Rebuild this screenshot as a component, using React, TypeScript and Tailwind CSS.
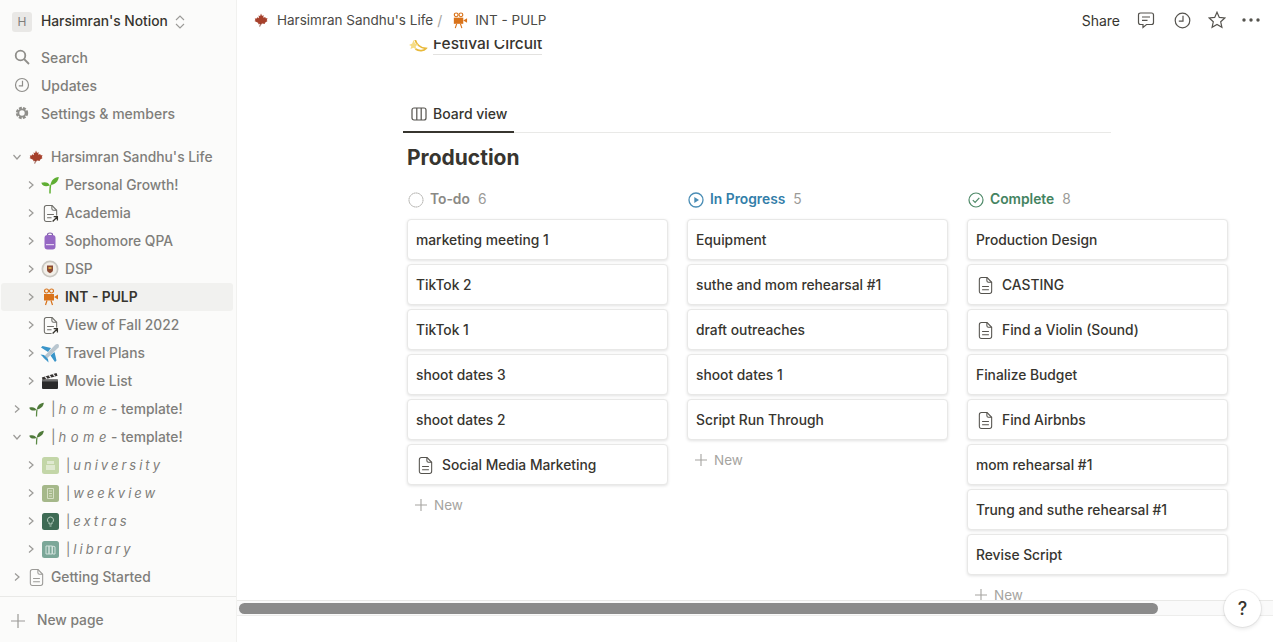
import { ReactNode } from 'react';

const font = { fontFamily: 'Inter, "Liberation Sans", sans-serif' };

function Leaf({ size = 14 }: { size?: number }) {
  return (
    <svg width={size} height={size} viewBox="0 0 16 16">
      <path d="M8 .5l1.200 2.800 1.700-1-.2 3.200 2.200-1 .4 1.500 2.200.1-1 2.100 1 .8-3.300 2.300.4 1.400-3.300-.6-.6 1.600-.5-1.600-3.600.7.500-1.500L.5 9.200l1.200-.9-.8-2 2.200 0 .5-1.500 2 1.100-.3-3.300 1.600 1z" fill="#a6402b" />
      <path d="M7.600 11.500L6.600 15.500" stroke="#7c3020" strokeWidth="1" />
    </svg>
  );
}

function Sprout({ size = 18, dark = false }: { size?: number; dark?: boolean }) {
  const c = dark ? '#4f7a3a' : '#5fae33';
  return (
    <svg width={size} height={size} viewBox="0 0 18 18">
      <path d="M9 17.500c0-4 0-6 .6-8.500" stroke={dark ? '#5b8a45' : '#62b236'} strokeWidth="1.500" fill="none" />
      <path d="M9.400 9C10 4.500 13 1.500 17.800 1 17.300 5.500 14 8.500 9.400 9z" fill={c} />
      <path d="M8.800 9.500C7.500 6.500 4.500 5.500.2 6.800 1.700 10.500 5 11 8.800 9.500z" fill={c} />
    </svg>
  );
}

function DocIcon({ size = 16, color = '#6f6e69', arrow = false }: { size?: number; color?: string; arrow?: boolean }) {
  return (
    <svg width={size} height={size} viewBox="0 0 16 16" fill="none" stroke={color} strokeWidth="1">
      <path d="M2.200 2.500C2.200 1.200 2.900.5 4.200.5h5.300L13.800 5v8.500c0 1.300-.7 2-2 2H4.200c-1.300 0-2-.7-2-2z" />
      <path d="M9.300.5V3.500c0 1 .5 1.500 1.500 1.500h3M4.800 9h6.400M4.800 12h6.400" />
      {arrow && (
        <g>
          <rect x="9" y="10" width="7" height="6" fill="#fbfbfa" stroke="none" />
          <path d="M10 15.500l4.500-4.500M11 11h3.500v3.500" stroke="#37352f" strokeWidth="1.200" />
        </g>
      )}
    </svg>
  );
}

function Backpack() {
  return (
    <svg width={18} height={18} viewBox="0 0 18 18">
      <path d="M6.500 4V2.800C6.500 1.500 7.500 1 9 1s2.500.5 2.500 1.800V4" stroke="#7d5aa8" strokeWidth="1.200" fill="none" />
      <rect x="3.500" y="3" width="11" height="14.500" rx="3" fill="#9668c4" />
      <rect x="5" y="12" width="8" height="1.200" fill="#e3d5f0" />
    </svg>
  );
}

function Seal() {
  return (
    <svg width={18} height={18} viewBox="0 0 18 18">
      <circle cx="9" cy="9" r="8.500" fill="#c9c7c1" />
      <circle cx="9" cy="9" r="6.800" fill="#f2efe8" />
      <path d="M6 5.500h6v4.500c0 1.500-1.500 2.500-3 3.200C7.500 12.500 6 11.500 6 10z" fill="#8a4a35" />
      <path d="M7.500 7h3v2h-3z" fill="#d9a441" />
    </svg>
  );
}

function Camera({ size = 18 }: { size?: number }) {
  const c = '#d9731a';
  return (
    <svg width={size} height={size} viewBox="0 0 18 18" fill="none">
      <circle cx="5.500" cy="3" r="2" stroke={c} strokeWidth="1.200" />
      <circle cx="10.500" cy="3" r="2" stroke={c} strokeWidth="1.200" />
      <rect x="3" y="6" width="10" height="6.500" fill={c} />
      <path d="M13 9l4-2.500v5L13 9z" fill={c} />
      <path d="M6 12.500L4.500 17M10 12.500l1.500 4.500" stroke={c} strokeWidth="1.200" />
    </svg>
  );
}

function Plane() {
  return (
    <svg width={20} height={20} viewBox="0 0 20 20">
      <path d="M18.500 1.500c-1-.9-2.500-.4-3.500.6L3 14.500l2.500 2.500L18 5c1-1 1.400-2.500.5-3.500z" fill="#b9c6cf" />
      <path d="M11 5L2.500 3 1 4.500 8 9zM14.500 9l2 8.500L15 19l-4.500-6.500z" fill="#3a95c9" />
      <path d="M4 12l-3.500-.5 4 4 4 4-.5-3.500z" fill="#3a95c9" />
    </svg>
  );
}

function Clapper() {
  return (
    <svg width={18} height={18} viewBox="0 0 18 18">
      <rect x="1" y="7.500" width="16" height="9.500" rx="1" fill="#2b2b2b" />
      <path d="M.8 5.500L15.500 1l1 2.800L1.800 8z" fill="#33302e" />
      <path d="M4 4.500l2 2.300M8 3.300l2 2.300M12 2.100l2 2.300" stroke="#e8e8e8" strokeWidth="1.300" />
      <rect x="1" y="7.500" width="16" height="2" fill="#6f6f6f" />
    </svg>
  );
}

function Tile({ bg, fg, kind }: { bg: string; fg: string; kind: 'cap' | 'list' | 'bulb' | 'books' }) {
  return (
    <svg width={17} height={17} viewBox="0 0 17 17">
      <rect width="17" height="17" rx="2.500" fill={bg} />
      {kind === 'cap' && <path d="M5 4h7v3H5zM4 8h9v5H4z" fill={fg} />}
      {kind === 'list' && <path d="M5.500 3.500h6v10h-6zM7 6h3M7 8.500h3M7 11h3" fill="none" stroke={fg} strokeWidth="1" />}
      {kind === 'bulb' && <path d="M8.500 4a3 3 0 0 0-1.500 5.600V11h3V9.600A3 3 0 0 0 8.500 4zM7.500 13h2" fill="none" stroke={fg} strokeWidth="1" />}
      {kind === 'books' && <path d="M4 5h3v8H4zM7 5h3v8H7zM10.500 5l2.500.8v7.200h-2.500z" fill="none" stroke={fg} strokeWidth="1" />}
    </svg>
  );
}

function Chevron({ open, color = '#9b9a97' }: { open?: boolean; color?: string }) {
  return (
    <svg width={10} height={10} viewBox="0 0 10 10" fill="none" stroke={color} strokeWidth="1.200" className="shrink-0">
      {open ? <path d="M1.500 3l3.500 4 3.500-4" /> : <path d="M3 1.500l4 3.500-4 3.500" />}
    </svg>
  );
}

function Row({ depth, open, icon, active, children }: { depth: 0 | 1; open?: boolean; icon: ReactNode; active?: boolean; children: ReactNode }) {
  return (
    <div className={`flex h-7 items-center ml-[1px] mr-[3px] rounded-[3px] text-[13.8px] ${depth === 0 ? 'pl-[11px]' : 'pl-[25px]'} ${active ? 'bg-[#f1f1ef] font-semibold text-[#37352f]' : 'font-medium text-[#7f7e7a]'}`}>
      <Chevron open={open} />
      <span className="flex w-[22px] ml-[3px] mr-[4px] shrink-0 justify-center">{icon}</span>
      {children}
    </div>
  );
}

function Spaced({ text }: { text: string }) {
  return (
    <span className="inline-block pt-[2px] text-[13px] font-normal text-[#7f7e7a]">
      <span className="ml-[1px] mr-[3px]">|</span>
      <span className="italic tracking-[3px]">{text}</span>
    </span>
  );
}

function Home() {
  return (
    <span className="font-normal">
      <span className="mr-[3px]">|</span>
      <span className="italic tracking-[4.500px] text-[13px]">home</span>
      <span className="font-medium">- template!</span>
    </span>
  );
}

function Sidebar() {
  return (
    <aside className="flex w-[237px] shrink-0 flex-col bg-[#fbfbfa] border-r border-[#f1f1ef]">
      <div className="flex h-[43px] items-center pl-[12px]">
        <div className="flex h-[20px] w-[20px] items-center justify-center rounded-[3px] bg-[#e9e8e6] text-[12px] text-[#7f7e7a]">H</div>
        <span className="ml-[9px] text-[13.8px] font-medium text-[#37352f]">Harsimran's Notion</span>
        <svg width={10} height={14} viewBox="0 0 10 14" fill="none" stroke="#9b9a97" strokeWidth="1.100" className="ml-[7px]">
          <path d="M1 5l4-4 4 4M1 9l4 4 4-4" />
        </svg>
      </div>
      {[
        { label: 'Search', icon: <svg width={16} height={16} viewBox="0 0 16 16" fill="none" stroke="#8f8e8a" strokeWidth="1.800"><circle cx="6.500" cy="6.500" r="4.800" /><path d="M10 10l5 5" /></svg> },
        { label: 'Updates', icon: <svg width={16} height={16} viewBox="0 0 16 16" fill="none" stroke="#8f8e8a" strokeWidth="1.200"><circle cx="8" cy="8" r="6.500" /><path d="M8.500 3.800V8.800H4.800" /></svg> },
        { label: 'Settings & members', icon: <svg width={16} height={16} viewBox="0 0 16 16" fill="none" stroke="#8f8e8a" strokeWidth="2.400" strokeDasharray="2.800 1.200"><circle cx="8" cy="8" r="5" /><circle cx="8" cy="8" r="3.600" strokeWidth="1.800" strokeDasharray="none" /></svg> },
      ].map((item) => (
        <div key={item.label} className="flex h-7 items-center pl-[14px] text-[14px] font-medium text-[#7f7e7a]">
          <span className="flex w-[16px] justify-center">{item.icon}</span>
          <span className="ml-[11px]">{item.label}</span>
        </div>
      ))}
      <div className="mt-[16px] flex-1 overflow-hidden">
        <Row depth={0} open icon={<Leaf />}>Harsimran Sandhu's Life</Row>
        <Row depth={1} icon={<Sprout />}>Personal Growth!</Row>
        <Row depth={1} icon={<DocIcon size={17} arrow />}>Academia</Row>
        <Row depth={1} icon={<Backpack />}>Sophomore QPA</Row>
        <Row depth={1} icon={<Seal />}>DSP</Row>
        <Row depth={1} active icon={<Camera />}>INT - PULP</Row>
        <Row depth={1} icon={<DocIcon size={17} arrow />}>View of Fall 2022</Row>
        <Row depth={1} icon={<Plane />}>Travel Plans</Row>
        <Row depth={1} icon={<Clapper />}>Movie List</Row>
        <Row depth={0} icon={<Sprout size={15} dark />}><Home /></Row>
        <Row depth={0} open icon={<Sprout size={15} dark />}><Home /></Row>
        <Row depth={1} icon={<Tile bg="#c3d6a8" fg="#dfe9d0" kind="cap" />}><Spaced text="university" /></Row>
        <Row depth={1} icon={<Tile bg="#a5b88a" fg="#d5dfc4" kind="list" />}><Spaced text="weekview" /></Row>
        <Row depth={1} icon={<Tile bg="#3e6b55" fg="#b9d0c2" kind="bulb" />}><Spaced text="extras" /></Row>
        <Row depth={1} icon={<Tile bg="#7ba798" fg="#d2e2dc" kind="books" />}><Spaced text="library" /></Row>
        <Row depth={0} icon={<DocIcon size={17} color="#9b9a97" />}>Getting Started</Row>
      </div>
      <div className="flex h-[46px] shrink-0 items-center border-t border-[#e9e9e7] pl-[11px] pt-[2px] text-[13.8px] font-medium text-[#7f7e7a]">
        <svg width={14} height={14} viewBox="0 0 14 14" stroke="#9b9a97" strokeWidth="1.200"><path d="M7 0v14M0 7h14" /></svg>
        <span className="ml-[12px]">New page</span>
      </div>
    </aside>
  );
}

function TopBar() {
  return (
    <header className="flex h-10 shrink-0 items-center bg-white pl-[17px] pr-[13px] text-[14px] text-[#37352f]">
      <Leaf />
      <span className="ml-[9px] text-[13.500px] text-[#4b4a46]">Harsimran Sandhu's Life</span>
      <span className="ml-[4px] text-[#a5a4a0]">/</span>
      <span className="ml-[9px]"><Camera size={17} /></span>
      <span className="ml-[7px] text-[13.500px] text-[#4b4a46]">INT - PULP</span>
      <span className="ml-auto">Share</span>
      <svg width={18} height={18} viewBox="0 0 18 18" fill="none" stroke="#55534e" strokeWidth="1.200" className="ml-[17px]">
        <path d="M3.500 2h11C15.800 2 16.500 2.700 16.500 4v7.500c0 1.300-.7 2-2 2H9.500L6 16.500v-3H3.500c-1.300 0-2-.7-2-2V4C1.500 2.700 2.200 2 3.500 2z" />
        <path d="M5 6h8M5 9.300h5.500" />
      </svg>
      <svg width={17} height={17} viewBox="0 0 17 17" fill="none" stroke="#55534e" strokeWidth="1.200" className="ml-[19px]">
        <circle cx="8.500" cy="8.500" r="7.300" />
        <path d="M9 3.800V9.200H4.800" />
      </svg>
      <svg width={18} height={18} viewBox="0 0 18 18" fill="none" stroke="#55534e" strokeWidth="1.200" className="ml-[17px]">
        <path d="M9 1.200l2.300 5.200 5.500.6-4.100 3.800 1.200 5.500L9 13.500l-4.900 2.800 1.200-5.500L1.200 7l5.500-.6z" />
      </svg>
      <svg width={18} height={4} viewBox="0 0 18 4" fill="#55534e" className="ml-[16px]">
        <circle cx="2" cy="2" r="1.700" /><circle cx="9" cy="2" r="1.700" /><circle cx="16" cy="2" r="1.700" />
      </svg>
    </header>
  );
}

type Card = { title: string; page?: boolean };
type Column = { name: string; count: number; color: string; icon: ReactNode; cards: Card[] };

const columns: Column[] = [
  {
    name: 'To-do',
    count: 6,
    color: 'text-[#8a8985]',
    icon: <svg width={16} height={16} viewBox="0 0 16 16" fill="none" stroke="#a8a7a3" strokeWidth="1" strokeDasharray="1.500 .4"><circle cx="8" cy="8" r="7" /></svg>,
    cards: [{ title: 'marketing meeting 1' }, { title: 'TikTok 2' }, { title: 'TikTok 1' }, { title: 'shoot dates 3' }, { title: 'shoot dates 2' }, { title: 'Social Media Marketing', page: true }],
  },
  {
    name: 'In Progress',
    count: 5,
    color: 'text-[#337ea9]',
    icon: <svg width={16} height={16} viewBox="0 0 16 16" fill="none" stroke="#4a8db5" strokeWidth="1.300"><circle cx="8" cy="8" r="7" /><path d="M6.300 5v6L11 8z" fill="#4a8db5" stroke="none" /></svg>,
    cards: [{ title: 'Equipment' }, { title: 'suthe and mom rehearsal #1' }, { title: 'draft outreaches' }, { title: 'shoot dates 1' }, { title: 'Script Run Through' }],
  },
  {
    name: 'Complete',
    count: 8,
    color: 'text-[#448361]',
    icon: <svg width={16} height={16} viewBox="0 0 16 16" fill="none" stroke="#4f8a69" strokeWidth="1.200"><circle cx="8" cy="8" r="7" /><path d="M4.800 8.200l2.300 2.300 4.200-4.700" /></svg>,
    cards: [{ title: 'Production Design' }, { title: 'CASTING', page: true }, { title: 'Find a Violin (Sound)', page: true }, { title: 'Finalize Budget' }, { title: 'Find Airbnbs', page: true }, { title: 'mom rehearsal #1' }, { title: 'Trung and suthe rehearsal #1' }, { title: 'Revise Script' }],
  },
];

function BoardColumn({ col }: { col: Column }) {
  return (
    <div className="w-[261px] shrink-0">
      <div className="mb-[5px] flex h-[30px] items-center pt-[1px] text-[13.800px]">
        <span className="ml-[1px]">{col.icon}</span>
        <span className={`ml-[6px] font-semibold ${col.color}`}>{col.name}</span>
        <span className="ml-[8px] text-[#9b9a97]">{col.count}</span>
      </div>
      <div className="flex flex-col gap-1">
        {col.cards.map((card) => (
          <div key={card.title} className="flex h-[41px] items-center rounded-[4px] border border-[#e8e8e7] bg-white px-[8px] pt-[1px] text-[13.800px] font-medium text-[#37352f] shadow-[0_1px_3px_rgba(15,15,15,0.12)]">
            {card.page && (
              <span className="ml-[1px] mr-[8px]"><DocIcon size={17} color="#55534e" /></span>
            )}
            {card.title}
          </div>
        ))}
      </div>
      <div className="mt-1 flex h-8 items-center pl-[8px] text-[13.500px] text-[#a5a4a0]">
        <svg width={12} height={12} viewBox="0 0 12 12" stroke="#a5a4a0" strokeWidth="1.100"><path d="M6 0v12M0 6h12" /></svg>
        <span className="ml-[7px]">New</span>
      </div>
    </div>
  );
}

function Star() {
  return (
    <svg width={20} height={17} viewBox="0 0 20 17" fill="none">
      <path d="M7 3c1 5 5 9 11 9.500-2 2.500-7 3-10.500.5" stroke="#e8b93a" strokeWidth="1.800" />
      <path d="M1 9l3.200-1.500L5.500 4l1.500 3.500 3.300.5-2.600 2.200.5 3.300-2.700-1.700L2.500 13l.8-3z" fill="#f6dc85" />
    </svg>
  );
}

export default function App() {
  return (
    <div className="relative flex h-[642px] w-[1273px] overflow-hidden bg-white" style={font}>
      <Sidebar />
      <main className="flex min-w-0 flex-1 flex-col">
        <TopBar />
        <div className="flex-1 overflow-hidden border-b border-[#e9e9e7] pl-[166px]">
          <div className="mt-[-7px] flex h-[22px] items-center pl-[5px]">
            <Star />
            <span className="ml-[5px] border-b border-[#e3e2e0] pt-[1px] text-[15.500px] leading-[20px] font-medium text-[#37352f]">Festival Circuit</span>
          </div>
          <div className="mt-[41px] flex h-[37px] w-[708px] border-b border-[#e9e9e7]">
            <div className="flex h-[37px] w-[111px] items-center border-b-2 border-[#37352f] pl-[8px] text-[14px] font-medium text-[#37352f]">
              <svg width={16} height={14} viewBox="0 0 16 14" fill="none" stroke="#55534e" strokeWidth="1.200">
                <rect x="1" y="1" width="14" height="12" rx="2" />
                <path d="M5.800 1v12M10.200 1v12" />
              </svg>
              <span className="ml-[6px]">Board view</span>
            </div>
          </div>
          <div className="flex h-[48px] items-center pl-[4px] pt-[2px] text-[21px] font-bold text-[#37352f]">Production</div>
          <div className="mt-[3px] flex w-max gap-[19px] pl-[4px]">
            {columns.map((col) => (
              <BoardColumn key={col.name} col={col} />
            ))}
          </div>
        </div>
        <div className="h-[15px] shrink-0 border-b border-[#ededec] bg-[#fafafa] pl-[2px] pt-[2px]">
          <div className="h-[11px] w-[919px] rounded-full bg-[#8b8b8b]" />
        </div>
        <div className="h-[26px] shrink-0" />
      </main>
      <div className="absolute left-[1224px] top-[590px] flex h-[37px] w-[37px] items-center justify-center rounded-full bg-white text-[18px] font-medium text-[#37352f] shadow-[0_0_0_1px_rgba(15,15,15,0.05),0_2px_4px_rgba(15,15,15,0.1)]">?</div>
    </div>
  );
}
